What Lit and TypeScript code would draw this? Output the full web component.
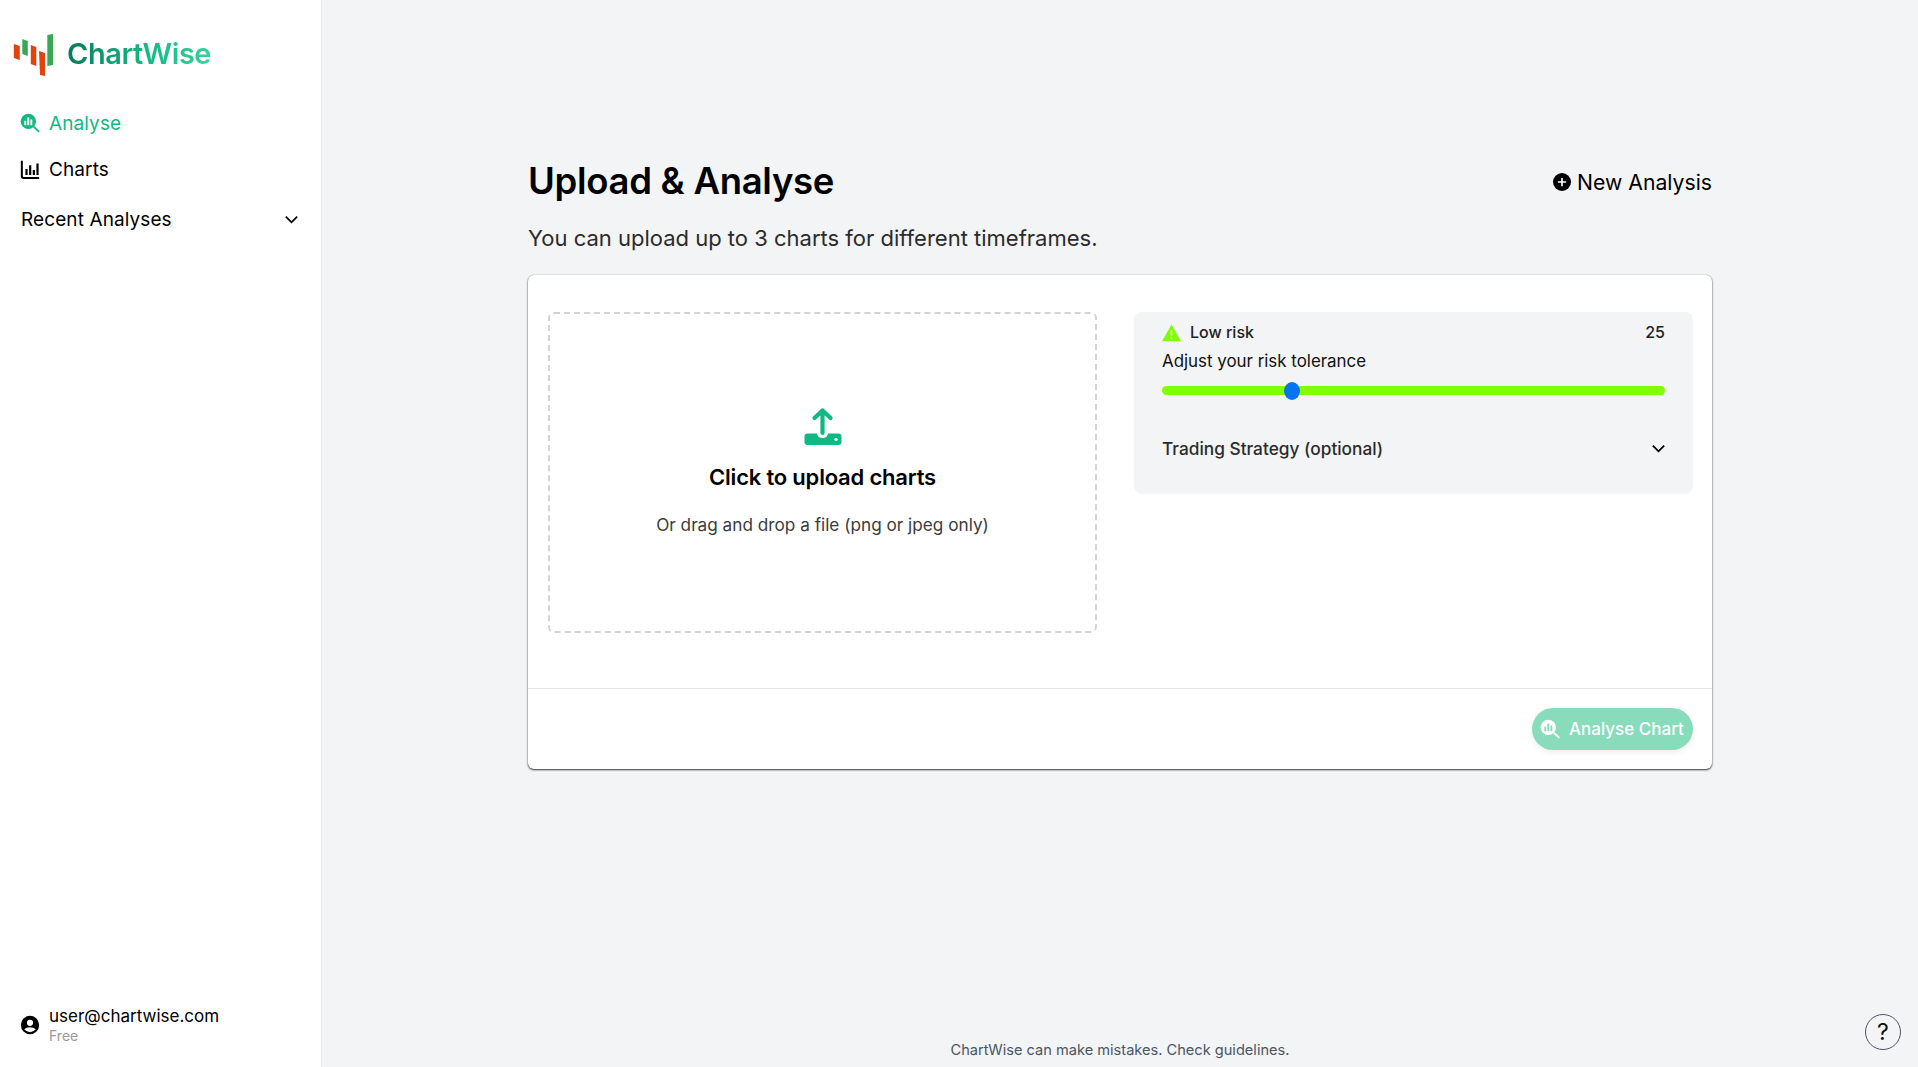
import { LitElement, html, css } from "lit";
import { customElement, state } from "lit/decorators.js";

const searchChart = html`
  <svg viewBox="0 0 24 24" fill="currentColor">
    <circle cx="10.2" cy="10.2" r="8.4" />
    <path d="M15.4 16.800l1.400-1.400 5.500 5.100a1 1 0 0 1-1.400 1.400l-5.500-5.100Z" />
    <path class="cut" d="M5.800 9.600h2.100v4.800H5.800zM9.100 6h2.100v8.400H9.100zM12.400 8.200h2.100v6.200h-2.100z" />
  </svg>
`;

const chevron = html`
  <svg class="chev" viewBox="0 0 24 24" fill="none" stroke="currentColor" stroke-width="2">
    <path d="M5.500 8.800 12 15.300l6.500-6.500" />
  </svg>
`;

@customElement("app-root")
export class AppRoot extends LitElement {
  static styles = css`
    :host {
      display: block;
      height: 1067px;
      overflow: hidden;
      font-family: "Inter", "Liberation Sans", sans-serif;
      color: #000;
    }
    .layout {
      display: flex;
      height: 100%;
      position: relative;
    }
    .sidebar {
      width: 322px;
      flex: none;
      box-sizing: border-box;
      background: #fff;
      border-right: 1px solid #e9eaee;
      display: flex;
      flex-direction: column;
      padding: 32px 21px 20px;
    }
    .brand {
      display: flex;
      align-items: center;
      margin-left: -8px;
      gap: 13px;
      height: 42px;
    }
    .brand svg {
      width: 41px;
      height: 42px;
      margin-top: 4px;
      flex: none;
    }
    .brand-name {
      font-size: 29px;
      font-weight: 600;
      letter-spacing: -0.45px;
      background: linear-gradient(90deg, #0b7a5c 0%, #14b981 55%, #34d399 100%);
      -webkit-background-clip: text;
      background-clip: text;
      color: transparent;
    }
    nav {
      display: flex;
      flex-direction: column;
      margin-top: 26px;
    }
    .nav-item {
      display: flex;
      align-items: center;
      gap: 8px;
      height: 46px;
      font-size: 19px;
      letter-spacing: 0.1px;
    }
    .nav-item svg {
      width: 22px;
      height: 22px;
      margin-left: -2px;
      flex: none;
    }
    .nav-item.active {
      color: #10b981;
    }
    .nav-item.active .cut {
      fill: #fff;
    }
    .recent {
      display: flex;
      align-items: center;
      justify-content: space-between;
      margin-top: 4px;
      height: 46px;
      font-size: 19px;
      letter-spacing: 0.1px;
    }
    .chev {
      width: 21px;
      height: 21px;
      margin-right: -2px;
      flex: none;
    }
    .user {
      margin-top: auto;
      display: flex;
      align-items: center;
      gap: 8px;
      padding-bottom: 2px;
    }
    .user svg {
      width: 22px;
      height: 22px;
      margin-left: -2px;
      flex: none;
    }
    .user-mail {
      font-size: 17px;
      line-height: 22px;
    }
    .user-plan {
      font-size: 14px;
      line-height: 18px;
      color: #9a9a9a;
    }
    main {
      flex: 1;
      background: #f3f4f6;
      display: flex;
      flex-direction: column;
      align-items: center;
      min-width: 0;
    }
    .content {
      width: 1184px;
      margin-top: 156px;
    }
    .head {
      display: flex;
      align-items: center;
      justify-content: space-between;
      height: 50px;
    }
    h1 {
      margin: 0;
      font-size: 36.5px;
      font-weight: 600;
      letter-spacing: -0.3px;
    }
    .new {
      display: flex;
      align-items: center;
      gap: 6px;
      font-size: 21.2px;
      padding-top: 2px;
    }
    .new svg {
      width: 18px;
      height: 18px;
    }
    .sub {
      margin: 18px 0 0;
      font-size: 22px;
      line-height: 28px;
      color: #2b2b2b;
    }
    .card {
      margin-top: 23px;
      background: #fff;
      border-radius: 6px;
      height: 494px;
      box-sizing: border-box;
      box-shadow: 0 1px 2px rgba(0, 0, 0, 0.8), 0 0 1px rgba(0, 0, 0, 0.35);
      display: flex;
      flex-direction: column;
    }
    .card-body {
      flex: 1;
      display: flex;
      gap: 37px;
      padding: 37px 19px 0 20px;
      align-items: flex-start;
      border-bottom: 1px solid #e4e5e7;
    }
    .drop {
      width: 549px;
      height: 321px;
      box-sizing: border-box;
      border: 2px dashed #d1d3d6;
      border-radius: 6px;
      display: flex;
      flex-direction: column;
      align-items: center;
      padding-top: 93px;
    }
    .drop svg {
      width: 38px;
      height: 38px;
    }
    .drop-title {
      margin-top: 17px;
      font-size: 22px;
      font-weight: 600;
      line-height: 30px;
      letter-spacing: -0.2px;
    }
    .drop-hint {
      margin-top: 21px;
      font-size: 17.2px;
      line-height: 24px;
      color: #3c3c3c;
    }
    .risk {
      flex: 1;
      height: 181px;
      box-sizing: border-box;
      background: #f3f4f6;
      border-radius: 8px;
      padding: 9px 28px 0 28px;
      box-shadow: 0 1px 2px rgba(0, 0, 0, 0.04);
    }
    .risk-top {
      display: flex;
      align-items: center;
      justify-content: space-between;
      height: 22px;
      font-size: 16px;
      font-weight: 500;
      color: #222;
    }
    .risk-level {
      display: flex;
      align-items: center;
      gap: 9px;
    }
    .risk-level svg {
      width: 19px;
      height: 19px;
    }
    .risk-label {
      margin-top: 6px;
      font-size: 16.9px;
      line-height: 24px;
      color: #111;
    }
    .slider {
      position: relative;
      height: 9px;
      margin-top: 13px;
      border-radius: 5px;
      background: #7fff00;
    }
    .thumb {
      position: absolute;
      top: -4.5px;
      width: 16px;
      height: 18px;
      margin-left: -8px;
      border-radius: 50%;
      background: #0773f5;
    }
    .strategy {
      display: flex;
      align-items: center;
      justify-content: space-between;
      margin-top: 43px;
      font-size: 17.3px;
      font-weight: 500;
      color: #2b2b2b;
    }
    .strategy .chev {
      color: #000;
      margin-right: -4px;
    }
    .card-foot {
      height: 80px;
      flex: none;
      display: flex;
      align-items: center;
      justify-content: flex-end;
      padding: 0 19px 0 0;
    }
    .analyse {
      display: flex;
      align-items: center;
      gap: 8px;
      height: 42px;
      width: 161px;
      box-sizing: border-box;
      padding: 0 0 0 7px;
      border: none;
      border-radius: 21px;
      background: #88dcbc;
      color: #fff;
      font: 500 17px "Inter", "Liberation Sans", sans-serif;
      box-shadow: 0 2px 6px rgba(0, 0, 0, 0.08);
    }
    .analyse svg {
      width: 22px;
      height: 22px;
      flex: none;
    }
    .analyse .cut {
      fill: #88dcbc;
    }
    footer {
      margin-top: auto;
      padding-bottom: 8px;
      font-size: 14.6px;
      line-height: 18px;
      color: #4b5563;
    }
    .help {
      position: absolute;
      right: 17px;
      bottom: 17px;
      width: 36px;
      height: 36px;
      box-sizing: border-box;
      border: 1.5px solid #4b5563;
      border-radius: 50%;
      display: flex;
      align-items: center;
      justify-content: center;
      font-size: 23px;
      color: #111;
    }
  `;

  @state()
  risk = 25;

  render() {
    return html`
      <div class="layout">
        <aside class="sidebar">
          <div class="brand">
            <svg viewBox="0 0 41 42">
              <polygon points="0.800,10 6.800,12 6.800,26 0.800,24" fill="#e1430f" />
              <polygon points="9.300,5 14.800,7 14.800,22 9.300,20" fill="#3aa757" />
              <polygon points="17.800,11 23.300,13 23.300,32 17.800,30" fill="#e1430f" />
              <polygon points="26,17 32,19 32,42 27,41" fill="#e1430f" />
              <polygon points="34.300,1 40,0 40,31 34.300,32" fill="#3aa757" />
            </svg>
            <span class="brand-name">ChartWise</span>
          </div>
          <nav>
            <div class="nav-item active">${searchChart}<span>Analyse</span></div>
            <div class="nav-item">
              <svg viewBox="0 0 24 24" fill="currentColor">
                <path d="M2 3h2.200v16.600c0 .7.500 1.200 1.200 1.200H22V23H5a3 3 0 0 1-3-3V3Z" />
                <path d="M7 12h2.400v6.500H7zM11 8h2.400v10.500H11zM15 13h2.400v5.500H15zM19 6h2.400v12.500H19z" />
              </svg>
              <span>Charts</span>
            </div>
          </nav>
          <div class="recent"><span>Recent Analyses</span>${chevron}</div>
          <div class="user">
            <svg viewBox="0 0 24 24" fill="currentColor">
              <path fill-rule="evenodd" d="M12 2a10 10 0 1 0 0 20 10 10 0 0 0 0-20Zm0 4.200a3.400 3.400 0 1 1 0 6.800 3.400 3.400 0 0 1 0-6.800Zm0 13.600a8 8 0 0 1-6.300-3.100c1.500-1.500 3.800-2.300 6.300-2.300s4.800.8 6.300 2.300a8 8 0 0 1-6.300 3.100Z" />
            </svg>
            <div>
              <div class="user-mail">user@chartwise.com</div>
              <div class="user-plan">Free</div>
            </div>
          </div>
        </aside>
        <main>
          <div class="content">
            <div class="head">
              <h1>Upload &amp; Analyse</h1>
              <div class="new">
                <svg viewBox="0 0 24 24">
                  <circle cx="12" cy="12" r="12" fill="#000" />
                  <path d="M12 6.500v11M6.500 12h11" stroke="#fff" stroke-width="2.200" />
                </svg>
                <span>New Analysis</span>
              </div>
            </div>
            <p class="sub">You can upload up to 3 charts for different timeframes.</p>
            <section class="card">
              <div class="card-body">
                <div class="drop">
                  <svg viewBox="0 0 38 38">
                    <path d="M3.500 26.500H13a5.600 5.600 0 0 0 11 0h10.500a3 3 0 0 1 3 3V35a3 3 0 0 1-3 3h-31a3 3 0 0 1-3-3v-5.500a3 3 0 0 1 3-3Z" fill="#10b981" />
                    <circle cx="32" cy="32.300" r="1.600" fill="#fff" />
                    <path d="M18.500 26V3.400M10.500 11 18.500 3.400l8 7.600" fill="none" stroke="#10b981" stroke-width="4.200" stroke-linecap="round" stroke-linejoin="round" />
                  </svg>
                  <div class="drop-title">Click to upload charts</div>
                  <div class="drop-hint">Or drag and drop a file (png or jpeg only)</div>
                </div>
                <div class="risk">
                  <div class="risk-top">
                    <span class="risk-level">
                      <svg viewBox="0 0 24 24">
                        <path d="M12 2 24 23H0Z" fill="#7fff00" />
                        <path d="M12 9v7M12 18v2.500" stroke="#fff" stroke-width="2" />
                      </svg>
                      Low risk
                    </span>
                    <span>${this.risk}</span>
                  </div>
                  <div class="risk-label">Adjust your risk tolerance</div>
                  <div class="slider">
                    <div class="thumb" style="left:calc(8px + (100% - 16px) * ${this.risk / 100})"></div>
                  </div>
                  <div class="strategy"><span>Trading Strategy (optional)</span>${chevron}</div>
                </div>
              </div>
              <div class="card-foot">
                <button class="analyse">${searchChart}<span>Analyse Chart</span></button>
              </div>
            </section>
          </div>
          <footer>ChartWise can make mistakes. Check guidelines.</footer>
        </main>
        <div class="help">?</div>
      </div>
    `;
  }
}
